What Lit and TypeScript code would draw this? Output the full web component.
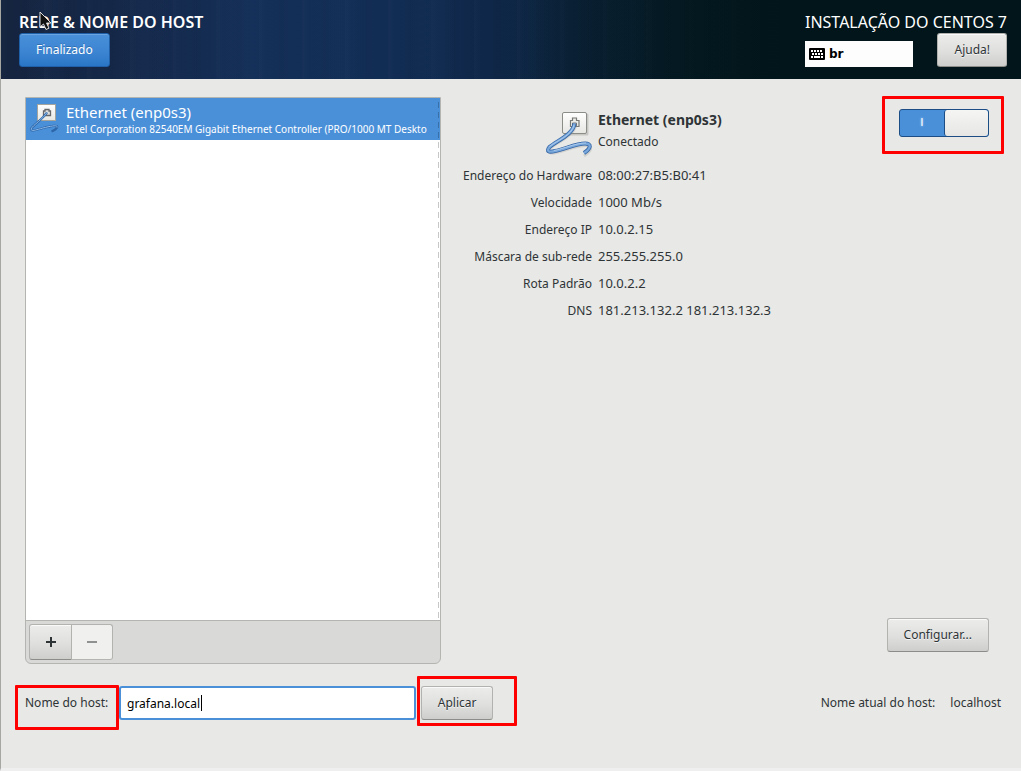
import { LitElement, html, css, svg } from "lit";
import { customElement, property, query } from "lit/decorators.js";

const DETAILS: [string, string][] = [
  ["Endereço do Hardware", "08:00:27:B5:B0:41"],
  ["Velocidade", "1000 Mb/s"],
  ["Endereço IP", "10.0.2.15"],
  ["Máscara de sub-rede", "255.255.255.0"],
  ["Rota Padrão", "10.0.2.2"],
  ["DNS", "181.213.132.2 181.213.132.3"],
];

@customElement("wired-icon")
class WiredIcon extends LitElement {
  static styles = css`
    :host { display: block; flex: none; }
    svg { display: block; width: 100%; height: 100%; overflow: visible; }
  `;
  @property({ type: Boolean }) small = false;
  render() {
    const large = svg`
      <rect x="17.5" y="5.5" width="25" height="22" rx="1.5" fill="#8a8a86" opacity=".35"/>
      <rect x="16.5" y="4.5" width="24" height="21" rx="1.5" fill="url(#p)" stroke="#8b8d89"/>
      <path d="M24.500 18.500v-6h2v-2.500h4v2.500h2.500v6z" fill="#ecece9" stroke="#777975" stroke-width="1.200"/>
      <path d="M26.500 19v-4h4v4" fill="none" stroke="#777975"/>
      <path d="M29 15.500C27 27 11 32.500 3.500 39C-1 43.500 3 45 9 43.500C18 41.500 30 36.500 39 36.500C46 36.500 45 41.500 37 47" fill="none" stroke="#8a8b88" stroke-width="3" opacity=".25" transform="translate(1 1)"/>
      <path d="M28.500 15.500C27 27 11 32.500 3.500 39C0 43.500 3 44.500 9 43C18 41.500 30 35.500 39 35.500C46 35.500 45 40.500 38 45" fill="none" stroke="#3566a5" stroke-width="4"/>
      <path d="M28.500 15.500C27 27 11 32.500 3.500 39C0 43.500 3 44.500 9 43C18 41.500 30 35.500 39 35.500C46 35.500 45 40.500 38 45" fill="none" stroke="#79a8dc" stroke-width="2.400"/>
      <path d="M28 17C26 27.500 11 32.500 3.500 38.500M8 42.500C18 40.500 30 35 40 35" fill="none" stroke="#b7d2ef" stroke-width=".8"/>`;
    const little = svg`
      <rect x="7.500" y="1.500" width="18" height="16" fill="url(#p)" stroke="#a5a49c"/>
      <path d="M13.500 12.500V8h1.500V6.500h4V8h1.500v4.500z" fill="#ddd" stroke="#65676a" stroke-width="1.300"/>
      <path d="M17 9.500C13 16 3 22 1 26C1 29 7 26.500 13 25C21 23 28.500 21.500 27 24.500C26 26.500 24 27.500 21.500 28.500" fill="none" stroke="#2c65a8" stroke-width="2.300"/>
      <path d="M17 9.500C13 16 3 22 1 26C1 29 7 26.500 13 25C21 23 28.500 21.500 27 24.500" fill="none" stroke="#8bb8e8" stroke-width="1"/>`;
    return html`<svg viewBox=${this.small ? "0 0 30 30" : "-2 0 48 48"} aria-hidden="true">
      <defs><linearGradient id="p" x1="0" y1="0" x2="0" y2="1"><stop stop-color="#fff"/><stop offset="1" stop-color="#e6e6e3"/></linearGradient></defs>
      ${this.small ? little : large}
    </svg>`;
  }
}

@customElement("app-root")
class AppRoot extends LitElement {
  static styles = css`
    :host { display: block; font: 13px/18px "Noto Sans", "Open Sans", sans-serif; color: #2e3436; }
    * { box-sizing: border-box; }
    .page {
      min-height: 100vh; display: flex; flex-direction: column;
      background: #e8e8e6; border-left: 1px solid #a6a6a3; border-bottom: 3px solid #efefef;
    }
    .header {
      display: flex; justify-content: space-between; padding: 12px 14px 12px 18px; color: #fff;
      background:
        linear-gradient(90deg, transparent 0 40%, #0a223500 50%, #02151a 79%),
        repeating-linear-gradient(90deg, #ffffff03 0 2px, transparent 7px 17px, #00081808 22px 24px, transparent 31px 43px),
        repeating-linear-gradient(90deg, transparent 0 20px, #2a5a900c 50px, transparent 70px 97px),
        linear-gradient(90deg, #15243f 0, #15294b 14%, #142f58 25%, #122d54 38%, #0f2748 48%, #0a2135 60%, #041b24 70%, #02151a 79%);
    }
    .title, .product { margin: 0; font-size: 16px; line-height: 21px; white-space: nowrap; }
    .title { position: relative; font-weight: 600; }
    .pointer { position: absolute; left: 20px; top: -1px; width: 14px; height: 20px; }
    .tools { display: flex; justify-content: space-between; align-items: flex-start; gap: 23px; }
    .layout {
      flex: 1; display: flex; align-items: center; gap: 4px; max-width: 108px; height: 26px; margin-top: 8px; padding: 0 4px;
      background: #fdfdfd; color: #000; font: bold 12px/18px "DejaVu Sans", sans-serif;
    }
    .layout svg { width: 16px; height: 12px; }
    .btn {
      display: inline-flex; align-items: center; justify-content: center; height: 34px; padding: 0 16px;
      font: inherit; font-size: 12px; color: #2e3436; text-shadow: 0 1px #ffffffb0;
      border: 1px solid #b2b2af; border-bottom-color: #8c8c89; border-radius: 3px;
      background: linear-gradient(#ececeb, #dfdfde 55%, #cececc); box-shadow: inset 0 1px #fafafa;
    }
    .primary {
      color: #fff; text-shadow: 0 -1px #0003; border-color: #1f60a8; box-shadow: inset 0 1px #6aa5e2;
      background: linear-gradient(#4a90d9, #3c85d3 55%, #2a76c6);
    }
    .main {
      flex: 1; display: grid; grid-template-columns: minmax(0, 416fr) minmax(0, 530fr); gap: 18px;
      padding: 18px 32px 22px 24px;
    }
    .devices { display: flex; flex-direction: column; border: 1px solid #b4b4b1; border-radius: 0 0 6px 6px; background: #d9d9d7; overflow: hidden; }
    .list { flex: 1; position: relative; margin: 0; padding: 0; list-style: none; background: #fff; border-bottom: 1px solid #b4b4b1; }
    .list::after {
      content: ""; position: absolute; top: 0; right: 1px; bottom: 0; width: 1px;
      background: repeating-linear-gradient(#0000 0 4px, #00000038 4px 10px);
    }
    .device { display: flex; gap: 6px; height: 42px; padding: 5px 0 0 4px; background: #4a90d9; color: #fff; }
    .device-icon { width: 30px; height: 30px; }
    .device-text { min-width: 0; flex: 1; white-space: nowrap; }
    .device-name { font-size: 15px; line-height: 18px; }
    .device-model { font-size: 10px; line-height: 16px; }
    .actions { display: flex; padding: 3px; }
    .square { width: 43px; height: 36px; padding: 0; }
    .square svg { width: 12px; height: 12px; }
    .add { border-radius: 3px 0 0 3px; }
    .remove { width: 41px; border-left: 0; border-bottom-color: #b4b4b1; border-radius: 0 3px 3px 0; background: #f0f0ef; box-shadow: none; }
    .panel { display: flex; flex-direction: column; justify-content: space-between; padding: 11px 0 12px; }
    .summary { display: grid; grid-template-columns: minmax(133px, auto) 1fr auto; column-gap: 6px; }
    .summary-icon { width: 48px; height: 48px; justify-self: end; }
    .name { margin: 0; padding-top: 1px; font-size: 14px; line-height: 22px; font-weight: 700; }
    .status { font-size: 12px; line-height: 22px; }
    .facts { display: grid; grid-template-columns: minmax(133px, auto) 1fr; column-gap: 6px; grid-auto-rows: 27px; margin: 6px 0 0; line-height: 27px; }
    .facts dt { text-align: right; white-space: nowrap; font-size: 12px; }
    .facts dd { margin: 0; }
    .switch { position: relative; display: grid; grid-template-columns: 44px 1fr; width: 90px; height: 28px; margin-top: 1px; border: 1px solid #1c4d84; border-radius: 3px; background: #4a90d9; color: #fff; }
    .switch input { position: absolute; inset: 0; width: 100%; height: 100%; margin: 0; opacity: 0; }
    .on { font: 10px/26px "Liberation Sans", sans-serif; text-align: center; text-shadow: 0 0 2px #fff; }
    .knob { border-left: 1px solid #1c4d84; border-radius: 3px; background: linear-gradient(#f5f5f4, #e6e6e5); }
    .configure { align-self: flex-end; }
    .footer { display: flex; justify-content: space-between; align-items: center; padding: 0 20px 48px 24px; white-space: nowrap; }
    .host-form { flex: 0 0 48%; display: grid; grid-template-columns: minmax(88px, auto) minmax(0, 1fr) auto; align-items: center; font-size: 12px; }
    .host-input { width: 100%; height: 34px; margin: 0; padding: 0 6px; border: 2px solid #4a90d9; border-radius: 3px; outline: 0; background: #fff; color: #000; font: inherit; }
    .field { position: relative; padding: 0 5px 0 6px; }
    .caret { position: absolute; left: 88px; top: 9px; width: 1px; height: 16px; background: #000; }
    .current { display: flex; gap: 15px; font-size: 12px; }
    .marked { position: relative; }
    .marked::after { content: ""; position: absolute; border: 3px solid #f00; border-radius: 1px; pointer-events: none; }
    .mark-switch::after { inset: -12px -15px -17px -17px; }
    .mark-label::after { inset: -9px -6px -18px -10px; }
    .mark-apply::after { inset: -10px -24px -6px -4px; }
    .mark-switch { align-self: start; }
  `;

  @query(".host-input") hostInput!: HTMLInputElement;

  firstUpdated() {
    this.hostInput.focus();
    const end = this.hostInput.value.length;
    this.hostInput.setSelectionRange(end, end);
  }

  render() {
    return html`
      <div class="page">
        <header class="header">
          <div>
            <h1 class="title">REDE &amp; NOME DO HOST
              <svg class="pointer" viewBox="0 0 14 20" aria-hidden="true"><path d="M1 1v15l3.500-3 2.500 5.500 3-1.300-2.500-5.200H12z" fill="#111" stroke="#ddd"/></svg>
            </h1>
            <button class="btn primary">Finalizado</button>
          </div>
          <div>
            <div class="product">INSTALAÇÃO DO CENTOS 7</div>
            <div class="tools">
              <div class="layout">
                <svg viewBox="0 0 16 12" aria-hidden="true"><rect width="16" height="12" rx="1"/><path d="M2 3h2m1 0h2m1 0h2m1 0h2M3 6h2m1 0h2m1 0h2m1 0h2M2 9h2m1 0h6m1 0h2" stroke="#fff" stroke-width="2"/></svg>
                <span>br</span>
              </div>
              <button class="btn">Ajuda!</button>
            </div>
          </div>
        </header>
        <main class="main">
          <section class="devices">
            <ul class="list">
              <li class="device">
                <wired-icon class="device-icon" small></wired-icon>
                <div class="device-text">
                  <div class="device-name">Ethernet (enp0s3)</div>
                  <div class="device-model">Intel Corporation 82540EM Gigabit Ethernet Controller (PRO/1000 MT Deskto</div>
                </div>
              </li>
            </ul>
            <div class="actions">
              <button class="btn square add" aria-label="Adicionar"><svg viewBox="0 0 12 12"><path d="M6 1v10M1 6h10" stroke="#2e3436" stroke-width="2"/></svg></button>
              <button class="btn square remove" aria-label="Remover" disabled><svg viewBox="0 0 12 12"><path d="M1 6h10" stroke="#8f9191" stroke-width="2"/></svg></button>
            </div>
          </section>
          <section class="panel">
            <div>
              <div class="summary">
                <wired-icon class="summary-icon"></wired-icon>
                <div>
                  <h2 class="name">Ethernet (enp0s3)</h2>
                  <div class="status">Conectado</div>
                </div>
                <div class="marked mark-switch">
                  <label class="switch">
                    <input type="checkbox" role="switch" aria-label="Ethernet (enp0s3)" checked />
                    <span class="on">I</span><span class="knob"></span>
                  </label>
                </div>
              </div>
              <dl class="facts">${DETAILS.map(([k, v]) => html`<dt>${k}</dt><dd>${v}</dd>`)}</dl>
            </div>
            <button class="btn configure">Configurar...</button>
          </section>
        </main>
        <footer class="footer">
          <form class="host-form" @submit=${(e: Event) => e.preventDefault()}>
            <label class="marked mark-label" for="hostname">Nome do host:</label>
            <div class="field"><input class="host-input" id="hostname" type="text" value="grafana.local" /><span class="caret"></span></div>
            <div class="marked mark-apply"><button class="btn">Aplicar</button></div>
          </form>
          <div class="current"><span>Nome atual do host:</span><span>localhost</span></div>
        </footer>
      </div>
    `;
  }
}
